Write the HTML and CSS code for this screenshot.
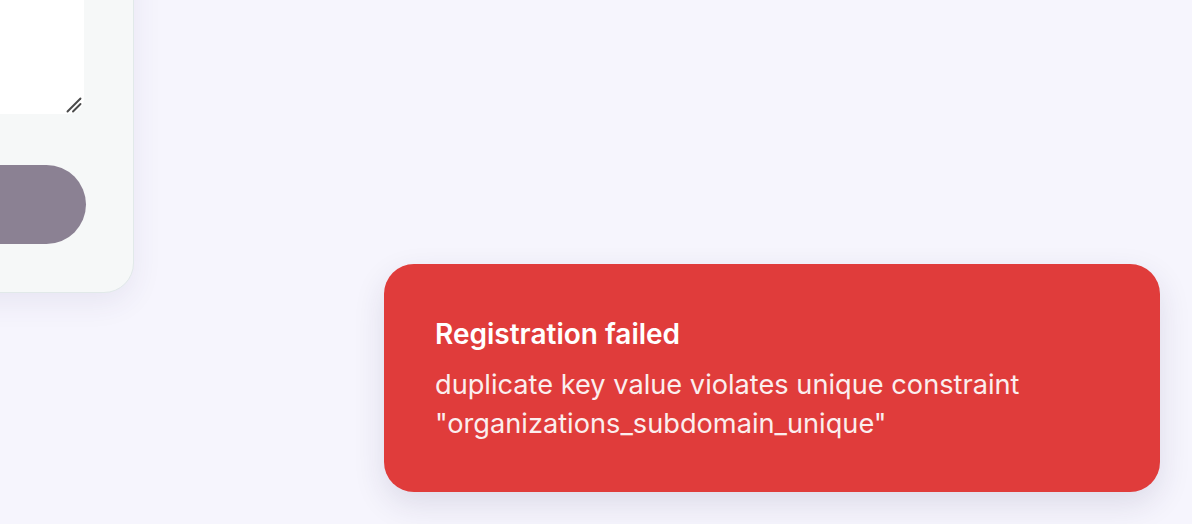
FILE: index.html
```html
<!DOCTYPE html>
<html lang="en">
<head>
<meta charset="utf-8">
<title>Register</title>
<link rel="stylesheet" href="styles.css">
</head>
<body>
<main class="page">
  <section class="card">
    <div class="field-wrap">
      <textarea class="field" aria-label="Description"></textarea>
      <svg class="grip" width="16" height="16" viewBox="0 0 16 16" aria-hidden="true">
        <line x1="1.5" y1="14.5" x2="14.5" y2="1.5" />
        <line x1="7" y1="14.5" x2="14.5" y2="7" />
      </svg>
    </div>
    <button class="submit" type="button"></button>
  </section>
</main>
<div class="toast" role="alert">
  <div class="toast-title">Registration failed</div>
  <div class="toast-desc">duplicate key value violates unique constraint "organizations_subdomain_unique"</div>
</div>
</body>
</html>
```

FILE: styles.css
```css
html, body {
  margin: 0;
  padding: 0;
}
body {
  background: #f6f5fd;
  font-family: Inter, "Noto Sans", sans-serif;
  width: 1192px;
  height: 524px;
  overflow: hidden;
  position: relative;
}
.page {
  display: flex;
}
.card {
  box-sizing: border-box;
  width: 400px;
  margin-left: -266px;
  margin-top: -200px;
  background: #f6f8f8;
  border: 1px solid #e1e9e9;
  border-radius: 30px;
  padding: 0 49px 48px 49px;
  display: flex;
  flex-direction: column;
  gap: 51px;
  box-shadow: 0 10px 30px rgba(60, 50, 120, 0.08);
}
.field-wrap {
  position: relative;
}
.field {
  display: block;
  box-sizing: border-box;
  width: 100%;
  height: 313px;
  border: none;
  border-radius: 16px;
  background: #ffffff;
  resize: none;
  outline: none;
}
.grip {
  position: absolute;
  right: 2px;
  bottom: 1px;
  stroke: #4a4a4a;
  stroke-width: 1.9;
  stroke-linecap: round;
}
.submit {
  display: block;
  width: calc(100% + 2px);
  height: 79px;
  border: none;
  border-radius: 40px;
  background: #8b8193;
}
.toast {
  position: absolute;
  left: 384px;
  top: 264px;
  width: 776px;
  height: 228px;
  box-sizing: border-box;
  background: #e03c3b;
  border-radius: 30px;
  padding: 54px 51px 0 51px;
  color: #ffffff;
  box-shadow: 0 12px 32px rgba(40, 30, 80, 0.12);
}
.toast-title {
  font-size: 28px;
  font-weight: 600;
  line-height: 32px;
  margin-bottom: 15px;
}
.toast-desc {
  font-size: 27.2px;
  line-height: 39px;
  color: #fbeeee;
  max-width: 640px;
}
```
